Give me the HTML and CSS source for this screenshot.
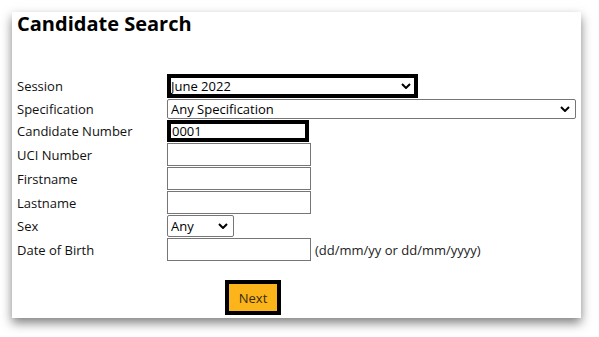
FILE: index.html
```html
<!DOCTYPE html>
<html lang="en">
<head>
  <meta charset="UTF-8" />
  <title>Candidate Search</title>
  <link rel="stylesheet" href="styles.css">
</head>
<body>

  <div class="tarjeta">
    <h1 class="titulo">Candidate Search</h1>

    <form class="formulario">
      <label for="session">Session</label>
      <div class="campo">
        <select id="session" class="resaltado sesion">
          <option>June 2022</option>
        </select>
      </div>

      <label for="spec">Specification</label>
      <div class="campo">
        <select id="spec" class="especificacion">
          <option>Any Specification</option>
        </select>
      </div>

      <label for="cand">Candidate Number</label>
      <div class="campo">
        <input id="cand" class="resaltado numero" type="text" value="0001" />
      </div>

      <label for="uci">UCI Number</label>
      <div class="campo"><input id="uci" class="texto" type="text" /></div>

      <label for="first">Firstname</label>
      <div class="campo"><input id="first" class="texto" type="text" /></div>

      <label for="last">Lastname</label>
      <div class="campo"><input id="last" class="texto" type="text" /></div>

      <label for="sex">Sex</label>
      <div class="campo">
        <select id="sex" class="sexo">
          <option>Any</option>
        </select>
      </div>

      <label for="dob">Date of Birth</label>
      <div class="campo">
        <input id="dob" class="texto" type="text" />
        <span class="ayuda">(dd/mm/yy or dd/mm/yyyy)</span>
      </div>
    </form>

    <button class="siguiente" type="button">Next</button>
  </div>

</body>
</html>
```

FILE: styles.css
```css
* { box-sizing: border-box; }

html, body {
  margin: 0;
  padding: 0;
  background: #fff;
}

body {
  min-height: 100vh;
  padding: 12px 0 0 12px;
  font-family: 'Open Sans', 'Liberation Sans', sans-serif;
  font-size: 13px;
  color: #111;
}

.tarjeta {
  width: 569px;
  height: 306px;
  padding: 0 5px;
  background: #fff;
  box-shadow: 0 5px 10px rgba(0, 0, 0, 0.5);
}

.titulo {
  margin: 0 0 38px;
  font-size: 20px;
  line-height: 24px;
  font-weight: 700;
  color: #000;
}

.formulario {
  display: grid;
  grid-template-columns: 150px auto;
  row-gap: 1px;
  align-items: center;
}

.formulario label {
  line-height: 18px;
}

.campo {
  display: flex;
  align-items: center;
  gap: 4px;
}

select, input {
  font-family: 'Open Sans', 'Liberation Sans', sans-serif;
  font-size: 13px;
  color: #000;
  background-color: #fff;
  margin: 0;
  padding: 0 2px;
  border: 1px solid #767676;
  border-radius: 0;
}

select {
  appearance: none;
  -webkit-appearance: none;
  line-height: 16px;
  padding: 0 20px 0 3px;
  background-image: url("data:image/svg+xml;utf8,<svg xmlns='http://www.w3.org/2000/svg' width='10' height='6' viewBox='0 0 10 6'><path d='M1 1 L5 5 L9 1' fill='none' stroke='black' stroke-width='2'/></svg>");
  background-repeat: no-repeat;
  background-position: right 5px center;
  background-size: 10px 6px;
}

.resaltado {
  border: 4px solid #000;
}

input.resaltado {
  padding: 0 1px;
  line-height: 14px;
}

select.resaltado {
  padding-left: 0;
  background-position: right 3px center;
}

.sesion {
  width: 251px;
  height: 24px;
}

.especificacion {
  width: 409px;
  height: 20px;
  border-radius: 2px;
}

.numero {
  width: 142px;
  height: 22px;
}

.texto {
  width: 144px;
  height: 23px;
}

.sexo {
  width: 67px;
  height: 22px;
  border-radius: 2px;
}

.ayuda {
  color: #222;
}

.siguiente {
  display: block;
  margin: 19px 0 0 208px;
  width: 56px;
  height: 35px;
  border: 4px solid #000;
  background: #fbb41a;
  color: #3a2a10;
  font-family: 'Open Sans', 'Liberation Sans', sans-serif;
  font-size: 13px;
  padding: 0;
}
```
